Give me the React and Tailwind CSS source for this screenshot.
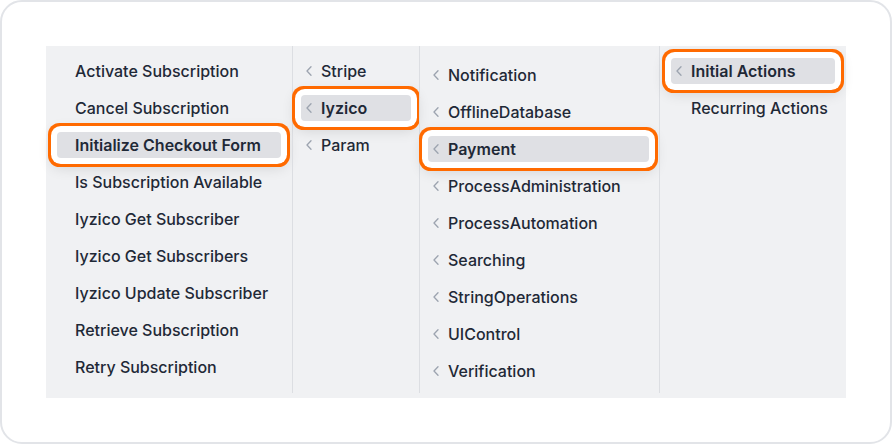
import React from 'react';

const columns = [
  {
    width: 'w-[246px] shrink-0',
    pad: 'pt-3 px-[11px]',
    chevron: false,
    items: [
      'Activate Subscription',
      'Cancel Subscription',
      'Initialize Checkout Form',
      'Is Subscription Available',
      'Iyzico Get Subscriber',
      'Iyzico Get Subscribers',
      'Iyzico Update Subscriber',
      'Retrieve Subscription',
      'Retry Subscription',
    ],
    active: 'Initialize Checkout Form',
  },
  {
    width: 'w-[127px] shrink-0',
    pad: 'pt-3 px-2',
    chevron: true,
    items: ['Stripe', 'Iyzico', 'Param'],
    active: 'Iyzico',
  },
  {
    width: 'w-[240px] shrink-0',
    pad: 'pt-4 pl-2 pr-[10px]',
    chevron: true,
    items: [
      'Notification',
      'OfflineDatabase',
      'Payment',
      'ProcessAdministration',
      'ProcessAutomation',
      'Searching',
      'StringOperations',
      'UIControl',
      'Verification',
    ],
    active: 'Payment',
  },
  {
    width: 'flex-1 min-w-0',
    pad: 'pt-3 px-[11px]',
    chevron: true,
    items: ['Initial Actions', 'Recurring Actions'],
    active: 'Initial Actions',
    noChevron: ['Recurring Actions'],
  },
];

function Chevron({ hidden }) {
  return (
    <svg
      width="6"
      height="10"
      viewBox="0 0 6 10"
      className={hidden ? 'invisible shrink-0' : 'shrink-0'}
    >
      <path d="M5 0.8 L1 5 L5 9.2" fill="none" stroke="#9ca3af" strokeWidth="1.3" strokeLinecap="round" strokeLinejoin="round" />
    </svg>
  );
}

function Item({ label, active, showChevron, first }) {
  return (
    <div
      className={
        'flex items-center h-[26px] pr-2 rounded-[4px] whitespace-nowrap ' +
        (first ? 'pl-[7px] gap-[5px] ' : 'pl-[5px] gap-[9px] ') +
        (active
          ? 'bg-[#dfe0e4] font-semibold shadow-[0_0_0_6px_#ffffff,0_0_0_9px_#ff6a00,0_4px_14px_6px_rgba(0,0,0,0.12)]'
          : 'font-medium')
      }
    >
      <Chevron hidden={!showChevron} />
      <span>{label}</span>
    </div>
  );
}

export default function App() {
  return (
    <div
      className="w-[892px] h-[444px] bg-white border-2 border-[#e2e4e8] rounded-[22px] p-[44px] text-[16px] text-[#1f2937]"
      style={{ fontFamily: 'Inter, "Noto Sans", sans-serif' }}
    >
      <div className="flex w-[800px] h-[352px] bg-[#f0f1f3] pb-[5px]">
        {columns.map((col, ci) => (
          <div
            key={ci}
            className={
              col.width +
              ' flex flex-col gap-[11px] ' +
              col.pad +
              ' ' +
              (ci > 0 ? 'border-l border-[#dcdee2]' : '')
            }
          >
            {col.items.map((it) => (
              <Item
                key={it}
                label={it}
                first={ci === 0}
                active={it === col.active}
                showChevron={col.chevron && !(col.noChevron || []).includes(it)}
              />
            ))}
          </div>
        ))}
      </div>
    </div>
  );
}
